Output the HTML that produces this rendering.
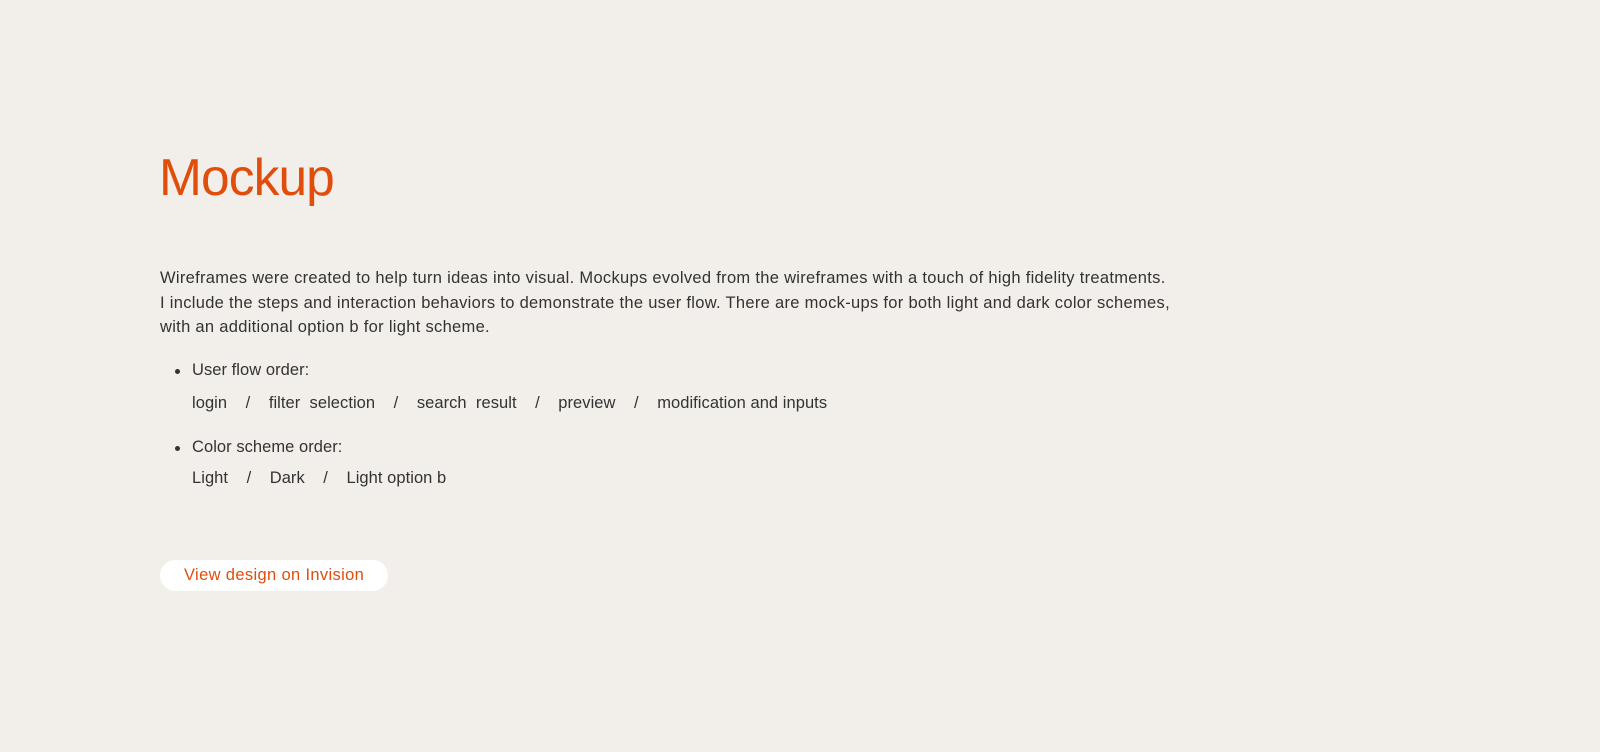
<!DOCTYPE html>
<html><head><style>
body{margin:0;background:#f2efea;width:1600px;height:752px;overflow:hidden;font-family:"Liberation Sans",sans-serif;color:#333;}
h1{position:absolute;left:159px;top:147px;margin:0;font-weight:400;font-size:51.5px;color:#e14d0b;letter-spacing:-0.9px;}
.p{position:absolute;left:160px;top:266px;font-size:16.5px;line-height:24.5px;letter-spacing:0.3px;white-space:nowrap;}
.l{position:absolute;left:192px;font-size:16.5px;letter-spacing:0.05px;white-space:pre;}
.b{position:absolute;left:175px;width:5px;height:5px;border-radius:50%;background:#333;}
.btn{position:absolute;left:160px;top:560px;width:228px;height:31px;background:#fff;border-radius:16px;color:#e14d0b;font-size:16.5px;line-height:31px;box-sizing:border-box;padding-left:24px;letter-spacing:0.35px;}
</style></head><body>
<h1>Mockup</h1>
<div class="p">Wireframes were created to help turn ideas into visual. Mockups evolved from the wireframes with a touch of high fidelity treatments.<br>I include the steps and interaction behaviors to demonstrate the user flow. There are mock-ups for both light and dark color schemes,<br>with an additional option b for light scheme.</div>
<div class="b" style="top:369px"></div>
<div class="l" style="top:361px">User flow order:</div>
<div class="l" style="top:394px">login    /    filter  selection    /    search  result    /    preview    /    modification and inputs</div>
<div class="b" style="top:446px"></div>
<div class="l" style="top:438px">Color scheme order:</div>
<div class="l" style="top:469px">Light    /    Dark    /    Light option b</div>
<div class="btn">View design on Invision</div>
</body></html>
